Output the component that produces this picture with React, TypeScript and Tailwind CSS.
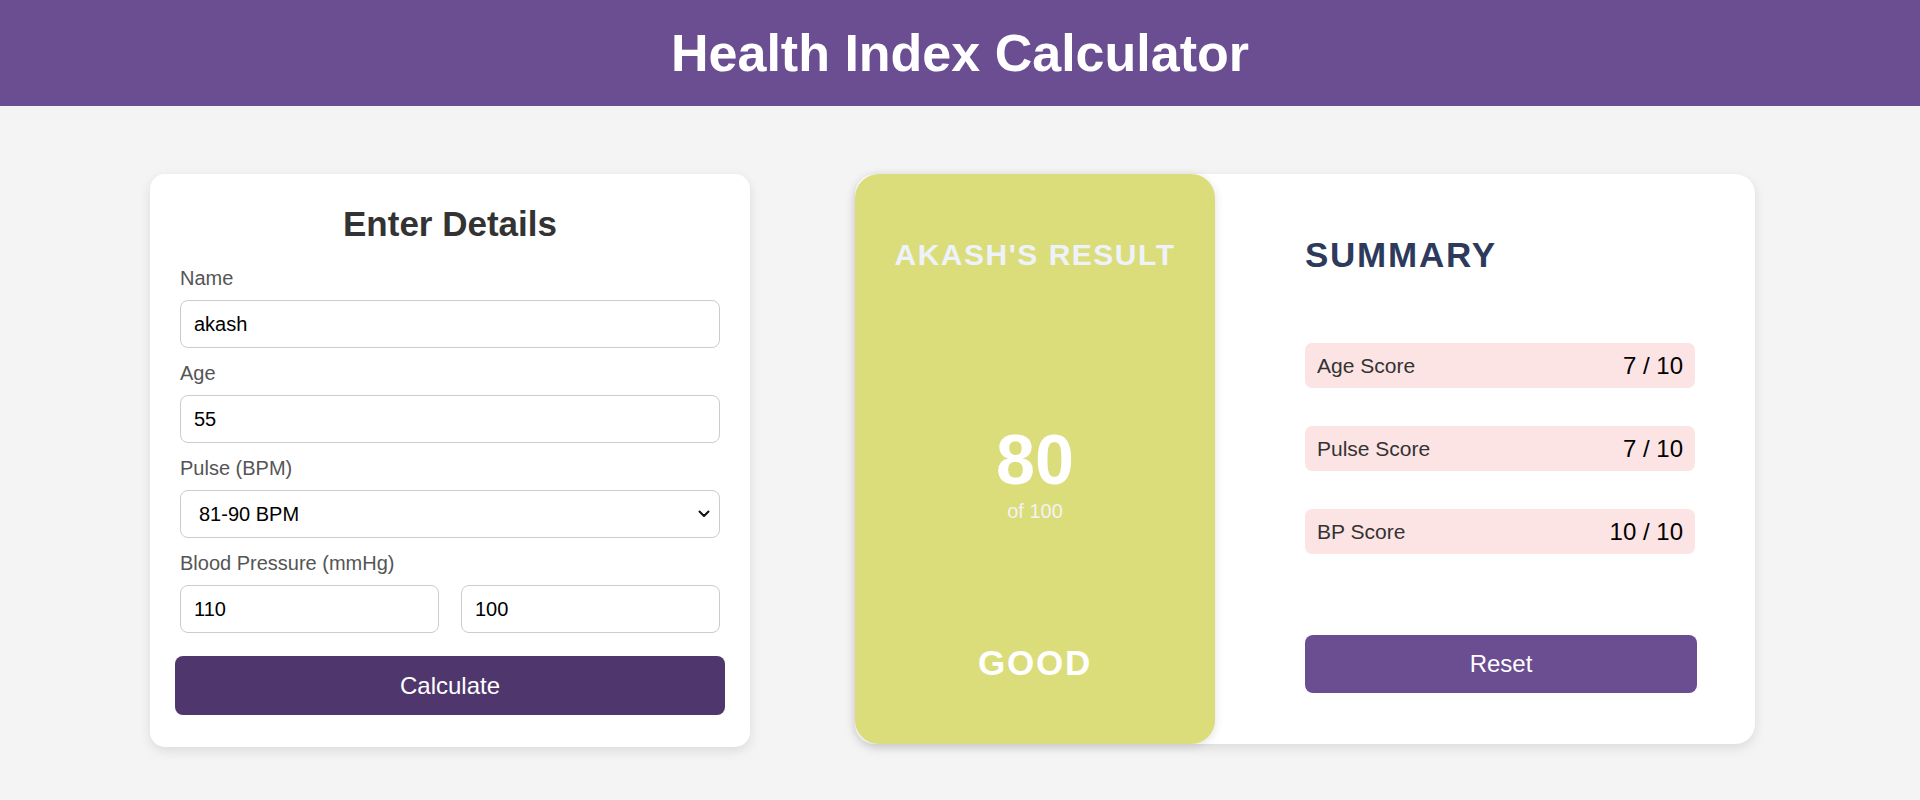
import { useState } from "react";

const font = { fontFamily: '"Liberation Sans", Arial, sans-serif' };

function Field({ label, children }: { label: string; children: React.ReactNode }) {
  return (
    <div className="mb-[14px]">
      <label className="block text-[20px] leading-[23px] text-[#555] mb-[10px]">{label}</label>
      {children}
    </div>
  );
}

const inputCls =
  "block w-full h-[48px] px-[13px] text-[20px] text-black bg-white border border-[#ccc] rounded-[8px] outline-none";

export default function App() {
  const [name, setName] = useState("akash");
  const [age, setAge] = useState("55");
  const [pulse, setPulse] = useState("81-90");
  const [sys, setSys] = useState("110");
  const [dia, setDia] = useState("100");

  const scores = [
    { label: "Age Score", value: "7 / 10" },
    { label: "Pulse Score", value: "7 / 10" },
    { label: "BP Score", value: "10 / 10" },
  ];

  return (
    <div className="min-h-[800px] bg-[#f4f4f4]" style={font}>
      <header className="h-[106px] bg-[#6a4e91] flex items-center justify-center">
        <h1 className="text-[52px] font-bold text-white leading-none">Health Index Calculator</h1>
      </header>

      <main className="flex items-start gap-[105px] pl-[150px] pt-[68px]">
        {/* form */}
        <section className="w-[600px] h-[573px] bg-white rounded-[15px] shadow-[0_4px_12px_rgba(0,0,0,0.1)] px-[30px] pt-[30px]">
          <h2 className="text-[35px] leading-[40px] font-bold text-[#333] text-center mb-[23px]">
            Enter Details
          </h2>
          <Field label="Name">
            <input className={inputCls} value={name} onChange={(e) => setName(e.target.value)} />
          </Field>
          <Field label="Age">
            <input className={inputCls} value={age} onChange={(e) => setAge(e.target.value)} />
          </Field>
          <Field label="Pulse (BPM)">
            <div className="relative">
              <select
                className={inputCls + " appearance-none pl-[18px]"}
                value={pulse}
                onChange={(e) => setPulse(e.target.value)}
              >
                <option value="60-70">60-70 BPM</option>
                <option value="71-80">71-80 BPM</option>
                <option value="81-90">81-90 BPM</option>
                <option value="91-100">91-100 BPM</option>
              </select>
              <svg
                className="absolute right-[10px] top-1/2 -translate-y-1/2 pointer-events-none"
                width="12"
                height="8"
                viewBox="0 0 12 8"
                fill="none"
              >
                <path d="M1.5 1.5 6 6l4.5-4.5" stroke="#111" strokeWidth="2" strokeLinecap="round" strokeLinejoin="round" />
              </svg>
            </div>
          </Field>
          <Field label="Blood Pressure (mmHg)">
            <div className="flex justify-between">
              <input className={inputCls + " !w-[259px]"} value={sys} onChange={(e) => setSys(e.target.value)} />
              <input className={inputCls + " !w-[259px]"} value={dia} onChange={(e) => setDia(e.target.value)} />
            </div>
          </Field>
          <button className="-mx-[5px] mt-[9px] w-[550px] h-[59px] rounded-[8px] bg-[#4f376e] text-white text-[24px]">
            Calculate
          </button>
        </section>

        {/* result */}
        <section className="w-[900px] h-[570px] flex bg-white rounded-[20px] shadow-[0_4px_12px_rgba(0,0,0,0.1)]">
          <div className="w-[360px] shrink-0 bg-[#dbdd7b] rounded-[24px] shadow-[0_2px_10px_rgba(0,0,0,0.12)] flex flex-col items-center pt-[64px]">
            <p className="text-[30px] leading-[34px] font-bold tracking-[1.5px] text-[#eef2fb] uppercase">
              {name}'s Result
            </p>
            <div className="mt-[148px] flex flex-col items-center">
              <span className="text-[70px] leading-[80px] font-bold text-white">80</span>
              <span className="text-[20px] leading-[22px] text-[#f3f3f3]">of 100</span>
            </div>
            <p className="mt-[121px] text-[35px] leading-[40px] font-bold tracking-[1.75px] text-white">GOOD</p>
          </div>

          <div className="flex-1 pl-[90px] pr-[58px] pt-[61px]">
            <h3 className="text-[35px] leading-[40px] font-bold tracking-[1.75px] text-[#2d3a5c]">SUMMARY</h3>
            <ul className="mt-[68px] w-[390px] flex flex-col gap-[38px]">
              {scores.map((s) => (
                <li
                  key={s.label}
                  className="h-[45px] px-[12px] flex items-center justify-between bg-[#fde4e4] rounded-[7px]"
                >
                  <span className="text-[21px] text-[#333]">{s.label}</span>
                  <span className="text-[24px] text-black">{s.value}</span>
                </li>
              ))}
            </ul>
            <button className="mt-[81px] w-[392px] h-[58px] rounded-[8px] bg-[#6a4e91] text-white text-[24px]">
              Reset
            </button>
          </div>
        </section>
      </main>
    </div>
  );
}
